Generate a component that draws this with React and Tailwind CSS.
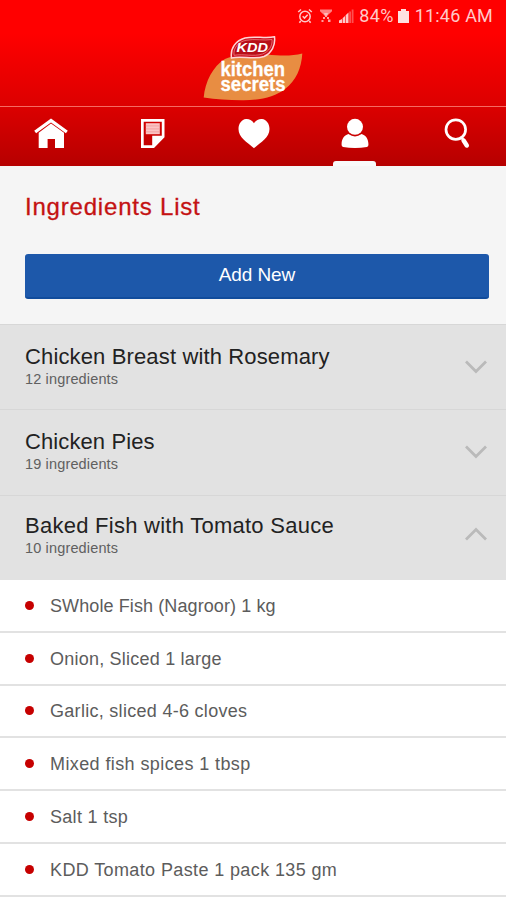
const recipes = [
  { title: 'Chicken Breast with Rosemary', count: 12, open: false, row: 'h-[85px]', body: 'pt-[18.5px]', tracking: 'tracking-[0.14px]' },
  { title: 'Chicken Pies', count: 19, open: false, row: 'h-[86px]', body: 'pt-[18.5px]', tracking: 'tracking-[0.1px]' },
  { title: 'Baked Fish with Tomato Sauce', count: 10, open: true, row: 'h-[85px]', body: 'pt-[17px]', tracking: 'tracking-[0.26px]' },
];

const ingredients = [
  { text: 'SWhole Fish (Nagroor) 1 kg', tracking: 'tracking-[0.1px]' },
  { text: 'Onion, Sliced 1 large', tracking: 'tracking-[0.22px]' },
  { text: 'Garlic, sliced 4-6 cloves', tracking: 'tracking-[0.29px]' },
  { text: 'Mixed fish spices 1 tbsp', tracking: 'tracking-[0.4px]' },
  { text: 'Salt 1 tsp', tracking: 'tracking-[0.3px]' },
  { text: 'KDD Tomato Paste 1 pack 135 gm', tracking: 'tracking-[0.38px]' },
];

function StatusBar() {
  return (
    <div className="flex h-8 items-center justify-end pr-[13px] font-['Roboto',sans-serif] text-[18px] leading-8 text-[#ffc9c9]">
      <svg className="mr-[6px] h-4 w-4" viewBox="0 0 16 16" fill="none" stroke="currentColor" strokeWidth="1.5">
        <circle cx="8" cy="8.5" r="5.2" />
        <path d="M1.2 4 4 1.5M14.8 4 12 1.5M3.7 13l-1.3 1.8M12.3 13l1.3 1.8M5.7 8.3l1.8 1.8 3.2-3.4" />
      </svg>
      <svg className="mr-[5px] h-4 w-[14px]" viewBox="0 0 14 16" fill="currentColor">
        <path d="M1 1.5h12v1.7L8.4 7.4H5.6L1 3.2z" opacity=".65" />
        <path d="M5 5h4L7.8 9H6.2zM4 9h2v2H4zM8 9h2v2H8zM2.5 12h2v2h-2zM9 11.5h2.5V14H9z" opacity=".8" />
      </svg>
      <svg className="mr-[5px] h-4 w-4" viewBox="0 0 16 16" fill="currentColor">
        <path d="M1 12.5 4 11v4H1zM4.6 10.2 7 8v7H4.6zM7.6 7.2 10.5 4.5V15H7.6z" />
        <path d="M11.2 3.5h1.8V15h-1.8zM13.7 1.5h1.8V15h-1.8z" opacity=".4" />
      </svg>
      <span className="tracking-[0.3px]">84%</span>
      <svg className="mr-[6px] ml-[4px] h-4 w-[11px]" viewBox="0 0 11 16" fill="#ffe0e0">
        <path d="M3 1h5v2h3v12H0V3h3z" />
      </svg>
      <span className="tracking-[0.2px]">11:46 AM</span>
    </div>
  );
}

function Logo() {
  return (
    <svg className="block h-[74px] w-[130px]" viewBox="190 32 130 74">
      <path
        d="M204.7 97.5C206 82 214 66 226 59C239 53 252 53.5 268 54.5C283 56 293 56 303.3 53.5C302.5 68 297 81 286 89C276 97 261 100.5 243 100.3C229 100.2 217 99.3 204.7 97.5Z"
        fill="#e88d42"
      />
      <path
        d="M232.5 58C231 48 237 40.5 246 38C256 35.6 266 39 275.5 36.8C276.5 45 273 53 265 56.5C255 60 243 55.5 232.5 58Z"
        fill="#cc1020"
        stroke="#ffd5d5"
        strokeWidth="1.5"
      />
      <path
        d="M235 55.3C234.3 48 239 42 247 40.3C256 38.4 265 41 273 39.5C273.5 46 270 51.5 263.5 54C254 57 245 53.5 235 55.3Z"
        fill="#b80d18"
        stroke="#f58e8e"
        strokeWidth=".7"
      />
      <text
        x="237.5"
        y="52.3"
        fill="#fff"
        fontFamily="Liberation Sans, sans-serif"
        fontSize="12"
        fontWeight="700"
        fontStyle="italic"
        textLength="31.5"
        lengthAdjust="spacingAndGlyphs"
      >
        KDD
      </text>
      <g
        fill="#fff"
        stroke="#fff"
        strokeWidth=".3"
        fontFamily="Liberation Sans, sans-serif"
        fontSize="20"
        fontWeight="700"
      >
        <text x="221.5" y="76" textLength="64.5" lengthAdjust="spacingAndGlyphs">kitchen</text>
        <text x="221.5" y="90.8" textLength="65" lengthAdjust="spacingAndGlyphs">secrets</text>
      </g>
    </svg>
  );
}

function HomeIcon() {
  return (
    <svg className="h-8 w-9" viewBox="0 0 36 32" fill="#fff">
      <path d="M18 1.6 34.8 13.7l-1.9 2.5L18 5.4 3.1 16.2l-1.9-2.5z" />
      <path d="M18 6.4 31 15.7V31H22v-9h-7.4v9H5.7V15.7z" />
    </svg>
  );
}

function NoteIcon() {
  return (
    <svg className="ml-0.5 h-8 w-6" viewBox="0 0 24 32">
      <path
        d="M0 2h23.5v18.2L13 31H0zM2.7 4.7v23.6h8.5v-9.6h9.6v-14z"
        fill="#fff"
        fillRule="evenodd"
      />
      <path d="M4.8 6.2h14v11h-14z" fill="#fbc4c4" />
      <path d="M4.8 8.9h14M4.8 11.9h14M4.8 14.8h14" stroke="#f09a9a" strokeWidth=".8" />
    </svg>
  );
}

function HeartIcon() {
  return (
    <svg className="ml-0.5 h-8 w-8" viewBox="0 0 32 32" fill="#fff">
      <path d="M16 6.2C18.2 2.6 21.3 1.8 24 2C28.3 2.4 31.5 6.7 31.5 12C31.5 20.5 23 25 16 31.2C9 25 .5 20.5 .5 12C.5 6.7 3.7 2.4 8 2C10.7 1.8 13.8 2.6 16 6.2Z" />
    </svg>
  );
}

function UserIcon() {
  return (
    <svg className="ml-0.5 h-8 w-7" viewBox="0 0 28 32" fill="#fff">
      <circle cx="14" cy="9.8" r="8" />
      <path d="M7.4 17Q14 21.9 20.6 17C25.2 18.4 27.4 22.5 27.4 26.8V28Q27.4 29.5 25.9 29.9Q14 32.2 2.1 29.9Q.6 29.5.6 28V26.8C.6 22.5 2.8 18.4 7.4 17Z" />
    </svg>
  );
}

function SearchIcon() {
  return (
    <svg className="ml-[3px] h-8 w-7" viewBox="0 0 28 32" fill="none" stroke="#fff">
      <circle cx="12.8" cy="12.6" r="9.8" strokeWidth="2.7" />
      <path d="m18.3 20.4 2.5 3" strokeWidth="2.5" />
      <path d="m20.6 23.6 3.2 4.9" strokeWidth="4.5" strokeLinecap="round" />
    </svg>
  );
}

function NavTab({ children, active }) {
  return (
    <div className="flex flex-1 flex-col items-center justify-between pt-[10px]">
      {children}
      {active && <div className="ml-px h-[5px] w-[43px] rounded-t-[3px] bg-[#f9f9f9]" />}
    </div>
  );
}

function Chevron({ up }) {
  return (
    <svg className="h-[14px] w-[24px]" viewBox="0 0 24 14" fill="none" stroke="#bababa" strokeWidth="2.8">
      <path d={up ? 'M2 12.5 12 2.5l10 10' : 'M2 1.5l10 10 10-10'} />
    </svg>
  );
}

export default function App() {
  return (
    <div className="flex h-[900px] w-[506px] flex-col overflow-hidden bg-white font-['Liberation_Sans',Arial,sans-serif]">
      <header className="flex h-[166px] shrink-0 flex-col bg-linear-to-b from-[#ff0000] from-20% via-[#dc0000] via-64% to-[#b60000]">
        <StatusBar />
        <div className="flex h-[74px] justify-center pl-0.5">
          <Logo />
        </div>
        <nav className="flex h-[60px] border-t border-[#f56a62]">
          <NavTab><HomeIcon /></NavTab>
          <NavTab><NoteIcon /></NavTab>
          <NavTab><HeartIcon /></NavTab>
          <NavTab active><UserIcon /></NavTab>
          <NavTab><SearchIcon /></NavTab>
        </nav>
      </header>

      <section className="flex h-[158px] shrink-0 flex-col bg-[#f5f5f5] pr-[17px] pl-[25px]">
        <h1 className="mt-[27px] text-[24px] leading-[28px] tracking-[0.8px] text-[#c41212] [-webkit-text-stroke:0.3px_#c41212]">
          Ingredients List
        </h1>
        <button className="mt-[33px] h-[45px] rounded-[3px] border-b-2 border-[#114c9c] bg-[#1d58aa] text-[19px] tracking-[-0.1px] text-white">
          Add New
        </button>
      </section>

      {recipes.map((recipe) => (
        <div
          key={recipe.title}
          className={`flex shrink-0 items-start justify-between border-t border-[#d7d7d7] bg-[#e2e2e2] pr-[18px] pl-[25px] ${recipe.row}`}
        >
          <div className={recipe.body}>
            <h2 className={`text-[22px] leading-[26px] text-[#222] ${recipe.tracking}`}>{recipe.title}</h2>
            <p className="text-[14.5px] leading-[18px] tracking-[0.15px] text-[#606060]">
              {recipe.count} ingredients
            </p>
          </div>
          <div className={recipe.open ? 'pt-[31px]' : 'pt-[35px]'}>
            <Chevron up={recipe.open} />
          </div>
        </div>
      ))}

      <ul className="shrink-0">
        {ingredients.map((item) => (
          <li key={item.text} className="flex h-[52.8px] items-center border-b-2 border-[#e2e2e2] pl-[25px]">
            <span className="mr-[16px] h-[9px] w-[9px] rounded-full bg-[#c60000]" />
            <span className={`pt-px text-[18px] leading-6 text-[#5c5c5c] ${item.tracking}`}>{item.text}</span>
          </li>
        ))}
      </ul>
    </div>
  );
}
